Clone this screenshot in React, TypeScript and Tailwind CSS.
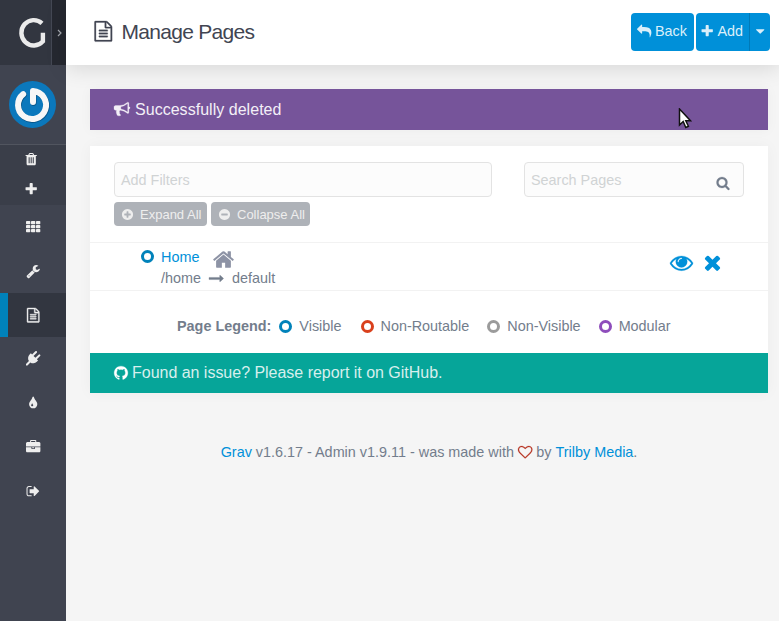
import type { ReactNode } from 'react';

const paths = {
  trash:
    'M704 1376v-704q0-14-9-23t-23-9h-64q-14 0-23 9t-9 23v704q0 14 9 23t23 9h64q14 0 23-9t9-23zm256 0v-704q0-14-9-23t-23-9h-64q-14 0-23 9t-9 23v704q0 14 9 23t23 9h64q14 0 23-9t9-23zm256 0v-704q0-14-9-23t-23-9h-64q-14 0-23 9t-9 23v704q0 14 9 23t23 9h64q14 0 23-9t9-23zm-544-992h448l-48-117q-7-9-17-11h-317q-10 2-17 11zm928 32v64q0 14-9 23t-23 9h-96v948q0 83-47 143.5t-113 60.5h-832q-66 0-113-58.5t-47-141.5v-952h-96q-14 0-23-9t-9-23v-64q0-14 9-23t23-9h309l70-167q15-37 54-63t79-26h320q40 0 79 26t54 63l70 167h309q14 0 23 9t9 23z',
  plus: 'M1600 736v192q0 40-28 68t-68 28h-416v416q0 40-28 68t-68 28h-192q-40 0-68-28t-28-68v-416h-416q-40 0-68-28t-28-68v-192q0-40 28-68t68-28h416v-416q0-40 28-68t68-28h192q40 0 68 28t28 68v416h416q40 0 68 28t28 68z',
  wrench:
    'M448 1472q0-26-19-45t-45-19-45 19-19 45 19 45 45 19 45-19 19-45zm644-420l-682 682q-37 37-90 37-52 0-91-37l-106-108q-38-36-38-90 0-53 38-91l681-681q39 98 114.5 173.5t173.5 114.5zm634-435q0 39-23 106-47 134-164.5 217.5t-258.5 83.5q-185 0-316.5-131.5t-131.5-316.5 131.5-316.5 316.5-131.5q58 0 121.5 16.5t107.5 46.5q16 11 16 28t-16 28l-293 169v224l193 107q5-3 79-48.5t135.5-81 70.5-35.5q15 0 23.5 10t8.5 25z',
  file: 'M1596 380q28 28 48 76t20 88v1152q0 40-28 68t-68 28h-1344q-40 0-68-28t-28-68v-1600q0-40 28-68t68-28h896q40 0 88 20t76 48zm-444-244v376h376q-10-29-22-41l-313-313q-12-12-41-22zm384 1528v-1024h-416q-40 0-68-28t-28-68v-416h-768v1536h1280zm-1024-864q0-14 9-23t23-9h704q14 0 23 9t9 23v64q0 14-9 23t-23 9h-704q-14 0-23-9t-9-23v-64zm736 224q14 0 23 9t9 23v64q0 14-9 23t-23 9h-704q-14 0-23-9t-9-23v-64q0-14 9-23t23-9h704zm0 256q14 0 23 9t9 23v64q0 14-9 23t-23 9h-704q-14 0-23-9t-9-23v-64q0-14 9-23t23-9h704z',
  plug: 'M1755 453q37 38 37 90.5t-37 90.5l-401 400 150 150-160 160q-163 163-389.5 186.5t-411.5-100.5l-362 362h-181v-181l362-362q-124-185-100.5-411.5t186.5-389.5l160-160 150 150 400-401q38-37 91-37t90 37 37 90.5-37 90.5l-400 401 234 234 401-400q38-37 91-37t90 37z',
  tint: 'M896 1152q0-36-20-69-1-1-15.5-22.5t-25.5-38-25-44-21-50.5q-4-16-21-16t-21 16q-7 23-21 50.5t-25 44-25.5 38-15.5 22.5q-20 33-20 69 0 53 37.5 90.5t90.5 37.5 90.5-37.5 37.5-90.5zm512-128q0 212-150 362t-362 150-362-150-150-362q0-145 81-275 6-9 62.5-90.5t101-151 99.5-178 83-201.5q9-30 34-47t51-17 51.5 17 33.5 47q28 93 83 201.5t99.5 178 101 151 62.5 90.5q81 127 81 275z',
  briefcase:
    'M640 256h512v-128h-512v128zm1152 640v480q0 66-47 113t-113 47h-1472q-66 0-113-47t-47-113v-480h672v160q0 26 19 45t45 19h320q26 0 45-19t19-45v-160h672zm-768 0v128h-256v-128h256zm768-480v384h-1792v-384q0-66 47-113t113-47h352v-160q0-40 28-68t68-28h576q40 0 68 28t28 68v160h352q66 0 113 47t47 113z',
  signOut:
    'M704 1440q0 4 1 20t.5 26.5-3 23.5-10 19.5-20.5 6.5h-320q-119 0-203.5-84.5t-84.5-203.5v-704q0-119 84.5-203.5t203.5-84.5h320q13 0 22.5 9.5t9.5 22.5q0 4 1 20t.5 26.5-3 23.5-10 19.5-20.5 6.5h-320q-66 0-113 47t-47 113v704q0 66 47 113t113 47h312l11.5 1 11.5 3 8 5.5 7 9 2 13.5zm928-544q0 26-19 45l-544 544q-19 19-45 19t-45-19-19-45v-288h-448q-26 0-45-19t-19-45v-384q0-26 19-45t45-19h448v-288q0-26 19-45t45-19 45 19l544 544q19 19 19 45z',
  bullhorn:
    'M1664 640q53 0 90.5 37.5t37.5 90.5-37.5 90.5-90.5 37.5v384q0 52-38 90t-90 38q-417-347-812-380-58 19-91 66t-31 100.5 40 92.5q-20 33-23 65.5t6 58 33.5 55 48 50 61.5 50.5q-29 58-111.5 83t-168.5 11.5-132-55.5q-7-23-29.5-87.5t-32-94.5-23-89-15-101 3.5-98.5 22-110.5h-122q-66 0-113-47t-47-113v-192q0-66 47-113t113-47h480q435 0 896-384 52 0 90 38t38 90v384zm-128 604v-954q-394 302-768 343v270q377 42 768 341z',
  reply:
    'M1792 1120q0 166-127 451-3 7-10.5 24t-13.5 30-13 22q-12 17-28 17-15 0-23.5-10t-8.5-25q0-9 2.5-26.5t2.5-23.5q5-68 5-123 0-101-17.5-181t-48.5-138.5-80-101-105.5-69.5-133-42.5-154-21.5-175.5-6h-224v256q0 26-19 45t-45 19-45-19l-512-512q-19-19-19-45t19-45l512-512q19-19 45-19t45 19 19 45v256h224q713 0 875 403 53 134 53 333z',
  caret: 'M1408 704q0 26-19 45l-448 448q-19 19-45 19t-45-19l-448-448q-19-19-19-45t19-45 45-19h896q26 0 45 19t19 45z',
  plusCircle:
    'M1344 960v-128q0-26-19-45t-45-19h-256v-256q0-26-19-45t-45-19h-128q-26 0-45 19t-19 45v256h-256q-26 0-45 19t-19 45v128q0 26 19 45t45 19h256v256q0 26 19 45t45 19h128q26 0 45-19t19-45v-256h256q26 0 45-19t19-45zm320-64q0 209-103 385.5t-279.5 279.5-385.5 103-385.5-103-279.5-279.5-103-385.5 103-385.5 279.5-279.5 385.5-103 385.5 103 279.5 279.5 103 385.5z',
  minusCircle:
    'M1344 960v-128q0-26-19-45t-45-19h-768q-26 0-45 19t-19 45v128q0 26 19 45t45 19h768q26 0 45-19t19-45zm320-64q0 209-103 385.5t-279.5 279.5-385.5 103-385.5-103-279.5-279.5-103-385.5 103-385.5 279.5-279.5 385.5-103 385.5 103 279.5 279.5 103 385.5z',
  home: 'M1472 992v480q0 26-19 45t-45 19h-384v-384h-256v384h-384q-26 0-45-19t-19-45v-480q0-1 .5-3t.5-3l575-474 575 474q1 2 1 6zm223-69l-62 74q-8 9-21 11h-3q-13 0-21-7l-692-577-692 577q-12 8-24 7-13-2-21-11l-62-74q-8-10-7-23.5t11-21.5l719-599q32-26 76-26t76 26l244 204v-195q0-14 9-23t23-9h192q14 0 23 9t9 23v408l219 182q10 8 11 21.5t-7 23.5z',
  arrow:
    'M1728 893q0 14-10 24l-384 354q-16 14-35 6-19-9-19-29v-224h-1248q-14 0-23-9t-9-23v-192q0-14 9-23t23-9h1248v-224q0-21 19-29t35 5l384 350q10 10 10 23z',
  eye: 'M1664 960q-152-236-381-353 61 104 61 225 0 185-131.5 316.5t-316.5 131.5-316.5-131.5-131.5-316.5q0-121 61-225-229 117-381 353 133 205 333.5 326.5t434.5 121.5 434.5-121.5 333.5-326.5zm-720-384q0-20-14-34t-34-14q-125 0-214.5 89.5t-89.5 214.5q0 20 14 34t34 14 34-14 14-34q0-86 61-147t147-61q20 0 34-14t14-34zm848 384q0 34-20 69-140 230-376.5 368.5t-499.5 138.5-499.5-139-376.5-368q-20-35-20-69t20-69q140-229 376.5-368t499.5-139 499.5 139 376.5 368q20 35 20 69z',
  times:
    'M1490 1322q0 40-28 68l-136 136q-28 28-68 28t-68-28l-294-294-294 294q-28 28-68 28t-68-28l-136-136q-28-28-28-68t28-68l294-294-294-294q-28-28-28-68t28-68l136-136q28-28 68-28t68 28l294 294 294-294q28-28 68-28t68 28l136 136q28 28 28 68t-28 68l-294 294 294 294q28 28 28 68z',
  search:
    'M1216 832q0-185-131.5-316.5t-316.5-131.5-316.5 131.5-131.5 316.5 131.5 316.5 316.5 131.5 316.5-131.5 131.5-316.5zm512 832q0 52-38 90t-90 38q-54 0-90-38l-343-342q-179 124-399 124-143 0-273.5-55.5t-225-150-150-225-55.5-273.5 55.5-273.5 150-225 225-150 273.5-55.5 273.5 55.5 225 150 150 225 55.5 273.5q0 220-124 399l343 343q37 37 37 90z',
  heart:
    'M1664 596q0-81-21.5-143t-55-98.5-81.5-59.5-94-31-98-8-112 25.5-110.5 64-86.5 72-60 61.5q-18 22-49 22t-49-22q-24-28-60-61.5t-86.5-72-110.5-64-112-25.5-98 8-94 31-81.5 59.5-55 98.5-21.5 143q0 168 187 355l581 560 580-559q188-188 188-356zm128 0q0 221-229 450l-623 600q-18 18-44 18t-44-18l-624-602q-10-8-27.5-26t-55.5-65.5-68-97.5-53.5-121-23.5-138q0-220 127-344t351-124q62 0 126.5 21.5t120 58 95.5 68.5 76 68q36-36 76-68t95.5-68.5 120-58 126.5-21.5q224 0 351 124t127 344z',
  github:
    'M896 128q209 0 385.5 103t279.5 279.5 103 385.5q0 251-146.5 451.5t-378.5 277.5q-27 5-40-7t-13-30q0-3 .5-76.5t.5-134.5q0-97-52-142 57-6 102.5-18t94-39 81-66.5 53-105 20.5-150.5q0-119-79-206 37-91-8-204-28-9-81 11t-92 44l-38 24q-93-26-192-26t-192 26q-16-11-42.5-27t-83.5-38.5-85-13.5q-45 113-8 204-79 87-79 206 0 85 20.5 150t52.5 105 80.5 67 94 39 102.5 18q-39 36-49 103-21 10-45 15t-57 5-65.5-21.5-55.5-62.5q-19-32-48.5-52t-49.5-24l-20-3q-21 0-29 4.5t-5 11.5 9 14 13 12l7 5q22 10 43.5 38t31.5 51l10 23q13 38 44 61.5t67 30 69.5 7 55.5-3.5l23-4q0 38 .5 88.5t.5 54.5q0 18-13 30t-40 7q-232-77-378.5-277.5t-146.5-451.5q0-209 103-385.5t279.5-279.5 385.5-103z',
};

type IconProps = { name: keyof typeof paths; size?: number; weight?: number; className?: string };

function Icon({ name, size = 14.4, weight = 0, className = '' }: IconProps) {
  return (
    <svg
      width={size}
      height={size}
      viewBox="0 0 1792 1792"
      fill="currentColor"
      stroke={weight ? 'currentColor' : 'none'}
      strokeWidth={weight}
      className={`shrink-0 overflow-visible ${className}`}
    >
      <path d={paths[name]} />
    </svg>
  );
}

function GridIcon() {
  return (
    <svg width="15" height="12" viewBox="0 0 15 12" fill="currentColor">
      {[0, 4, 8].map((y) =>
        [0, 5, 10].map((x) => <rect key={`${x}-${y}`} x={x} y={y} width="4.3" height="3.3" rx="0.7" />),
      )}
    </svg>
  );
}

function NavItem({ children, active = false }: { children: ReactNode; active?: boolean }) {
  return (
    <a
      className={
        active
          ? 'flex h-11 items-center justify-center border-l-8 border-[#0082ba] bg-[#323640] pr-2'
          : 'flex h-11 items-center justify-center'
      }
    >
      {children}
    </a>
  );
}

function Ring({ className }: { className: string }) {
  return <span className={`block size-[13px] shrink-0 rounded-full border-3 ${className}`} />;
}

function Sidebar() {
  return (
    <aside className="h-full w-[66px] shrink-0 bg-[#404450] text-[#eeeeee]">
      <div className="flex h-[65px] bg-[#323640]">
        <div className="flex w-[51px] items-center pl-[18px]">
          <svg width="28" height="32" viewBox="0 0 28 32" fill="none" stroke="#ebebeb" strokeWidth="4.4">
            <path d="M24 6.3A12.4 12.7 0 1 0 24.9 24.4V15.8" />
          </svg>
        </div>
        <div className="flex w-[15px] items-center justify-center border-l border-[#444854] bg-[#252830]">
          <svg width="5" height="8" viewBox="0 0 5 8" fill="none" stroke="#a4a7ae" strokeWidth="1.2">
            <path d="M1 1l3 3-3 3" />
          </svg>
        </div>
      </div>
      <div className="flex h-[80px] items-center border-b border-[#51555f] pl-[9px]">
        <svg width="47" height="47" viewBox="0 0 47 47" fill="none" strokeLinecap="round" strokeLinejoin="round">
          <circle cx="23.5" cy="23.5" r="23.5" fill="#0b78bc" />
          <path d="M14.2 13.1A14 14 0 1 0 24 10V21" stroke="#07568b" strokeWidth="6.2" transform="translate(0.6 0.8)" />
          <path d="M14.2 13.1A14 14 0 1 0 24 10V21" stroke="#f7f7f7" strokeWidth="6" />
        </svg>
      </div>
      <div className="flex h-[60px] flex-col items-center bg-[#3a3e49] pr-1">
        <div className="flex h-[29px] items-center">
          <Icon name="trash" />
        </div>
        <div className="flex h-[29px] items-center pt-px">
          <Icon name="plus" />
        </div>
      </div>
      <nav>
        <NavItem><GridIcon /></NavItem>
        <NavItem><Icon name="wrench" /></NavItem>
        <NavItem active><Icon name="file" weight={50} /></NavItem>
        <NavItem><Icon name="plug" className="-mt-px" /></NavItem>
        <NavItem><Icon name="tint" /></NavItem>
        <NavItem><Icon name="briefcase" /></NavItem>
        <NavItem><Icon name="signOut" /></NavItem>
      </nav>
    </aside>
  );
}

function Header() {
  return (
    <header className="flex h-[65px] items-center bg-white pr-[9px] pb-0.5 pl-[27px] shadow-[0_4px_20px_rgba(0,0,0,0.12)]">
      <Icon name="file" size={20.6} weight={25} className="mr-[8px] text-[#414552]" />
      <h1 className="text-[21px] tracking-[-0.72px] text-[#414552]">Manage Pages</h1>
      <div className="ml-auto flex gap-0.5 text-[14.4px] text-[#dbeffa]">
        <button className="flex h-[38px] w-[63px] items-center gap-[3.5px] rounded bg-[#0090d9] pl-1.5">
          <Icon name="reply" /> Back
        </button>
        <div className="flex h-[38px] w-[74px] rounded bg-[#0090d9]">
          <button className="flex w-[54px] items-center gap-[3px] border-r border-[#007ab8] pl-1">
            <Icon name="plus" /> Add
          </button>
          <button className="flex flex-1 items-center justify-center">
            <Icon name="caret" />
          </button>
        </div>
      </div>
    </header>
  );
}

const legend = [
  { label: 'Visible', ring: 'border-[#0082ba]', gap: 'ml-2' },
  { label: 'Non-Routable', ring: 'border-[#d9401c]', gap: 'ml-[19px]' },
  { label: 'Non-Visible', ring: 'border-[#9b9b9b]', gap: 'ml-[18px]' },
  { label: 'Modular', ring: 'border-[#8e4dbb]', gap: 'ml-[18px]' },
];

export default function App() {
  return (
    <div className="relative flex h-[621px] w-[779px] overflow-hidden bg-[#f5f5f5] font-['Liberation_Sans',Arial,sans-serif] text-[14.4px] text-[#737d8c]">
      <Sidebar />
      <main className="min-w-0 flex-1">
        <Header />
        <div className="pt-6 pr-[11px] pl-6">
          <div className="flex h-[41px] items-center gap-[5px] bg-[#76549a] pl-6 text-base text-[#f3eff7] shadow-[0_0_12px_rgba(0,0,0,0.04)]">
            <Icon name="bullhorn" size={16} weight={30} className="-mt-0.5" />
            <span className="tracking-[0.03px]">Successfully deleted</span>
          </div>
          <section className="mt-4 h-[247px] bg-white shadow-[0_0_14px_rgba(0,0,0,0.04)]">
            <div className="h-[97px] border-b border-[#f2f2f2] px-6 pt-4">
              <div className="flex gap-8">
                <div className="flex h-[35px] w-[378px] items-center rounded border border-[#e3e3e3] bg-[#fcfcfc] pt-0.5 pl-1.5 text-[#d0d3d4]">
                  Add Filters
                </div>
                <div className="flex h-[35px] w-[220px] items-center justify-between rounded border border-[#e3e3e3] bg-[#fcfcfc] pt-0.5 pr-[13px] pl-1.5 text-[#d0d3d4]">
                  Search Pages
                  <Icon name="search" size={14} weight={30} className="mt-[5px] text-[#737d8c]" />
                </div>
              </div>
              <div className="mt-[5px] flex gap-1 text-[13px] text-[#eeeeee]">
                <button className="flex h-6 w-[93px] items-center gap-1.5 rounded bg-[#aeb2b8] pt-0.5 pl-[7px] whitespace-nowrap">
                  <Icon name="plusCircle" size={13} className="-mt-px" /> Expand All
                </button>
                <button className="flex h-6 w-[99px] items-center gap-1.5 rounded bg-[#aeb2b8] pt-0.5 pl-[7px] whitespace-nowrap">
                  <Icon name="minusCircle" size={13} className="-mt-px" /> Collapse All
                </button>
              </div>
            </div>
            <div className="flex h-12 items-start justify-between border-b border-[#f2f2f2] pr-11 pl-[51px]">
              <div>
                <div className="flex h-[22px] items-center pt-2">
                  <Ring className="mr-[7px] -mt-1 border-[#0082ba]" />
                  <span className="text-[#0090d9]">Home</span>
                  <Icon name="home" size={23} className="ml-[13px] mt-0.5 text-[#8d93a5]" />
                </div>
                <div className="flex h-[21px] items-center pt-1.5 pl-5">
                  /home
                  <Icon name="arrow" size={15} weight={40} className="mx-2" />
                  default
                </div>
              </div>
              <div className="flex items-center gap-2 pt-2 text-[#0090d9]">
                <Icon name="eye" size={23} weight={20} />
                <Icon name="times" size={23} />
              </div>
            </div>
            <div className="flex h-[62px] items-center pt-2.5 pl-[87px]">
              <b>Page Legend:</b>
              {legend.map((item) => (
                <div key={item.label} className={`flex items-center gap-[7px] whitespace-nowrap ${item.gap}`}>
                  <Ring className={`-mt-px ${item.ring}`} />
                  {item.label}
                </div>
              ))}
            </div>
            <div className="flex h-10 items-center gap-[3px] bg-[#06a599] pl-6 text-base text-[#d6efed]">
              <Icon name="github" size={16} weight={30} className="-ml-px text-white" />
              <span className="tracking-[-0.02px]">Found an issue? Please report it on GitHub.</span>
            </div>
          </section>
          <footer className="flex items-center justify-center pt-[49px] leading-5 whitespace-pre">
            <a className="text-[#0090d9]">Grav</a> v1.6.17 - Admin v1.9.11 - was made with{' '}
            <Icon name="heart" weight={30} className="text-[#b5301e]" /> by{' '}
            <a className="text-[#0090d9]">Trilby Media</a>.
          </footer>
        </div>
      </main>
      <svg className="absolute top-[108px] left-[678px]" width="14" height="21" viewBox="0 0 14 21">
        <path d="M1.5 1v16l3.7-3.5 2.6 6 2.6-1.2-2.6-5.6h4.7z" fill="#fff" stroke="#111" strokeWidth="1.5" />
      </svg>
    </div>
  );
}
